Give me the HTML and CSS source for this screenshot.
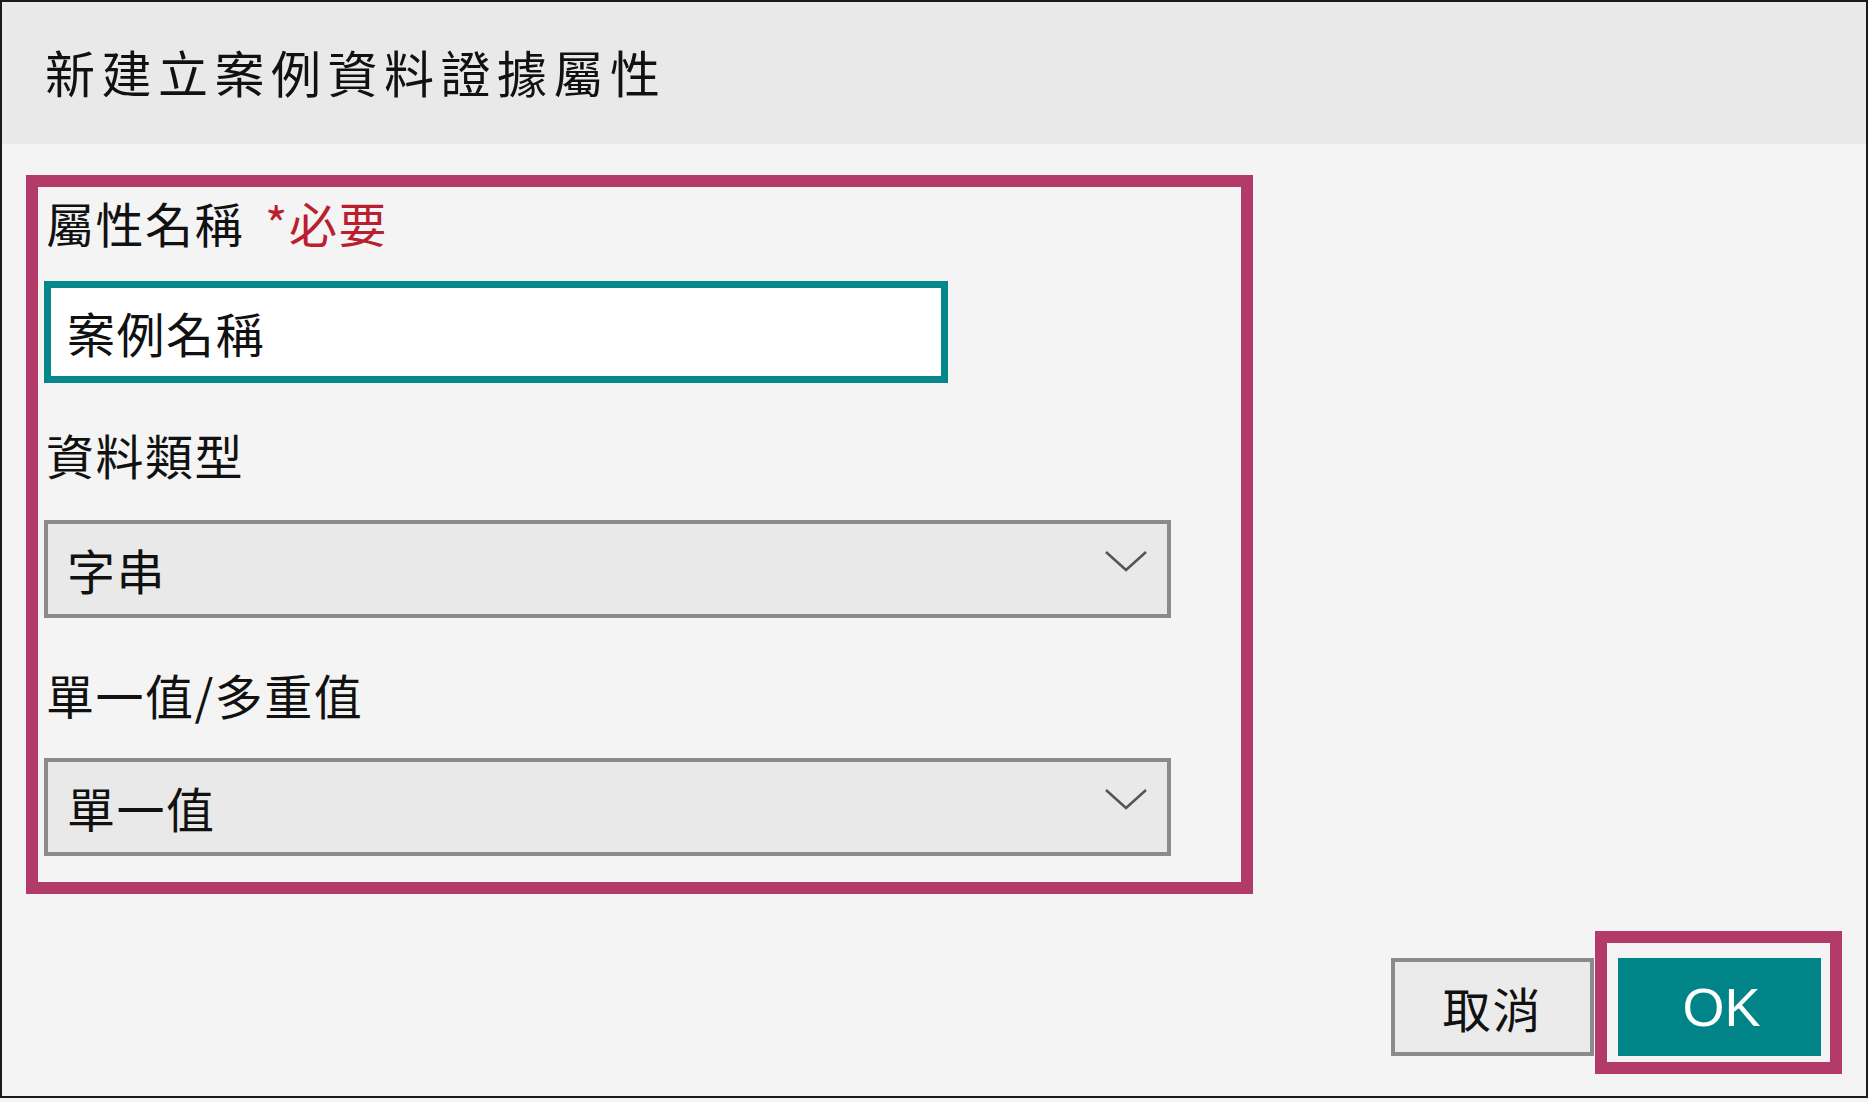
FILE: index.html
```html
<!DOCTYPE html>
<html lang="zh-Hant">
<head>
<meta charset="utf-8">
<title>新建立案例資料證據屬性</title>
<link rel="stylesheet" href="styles.css">
</head>
<body>
<div class="dialog">
  <div class="header">新建立案例資料證據屬性</div>
  <div class="body">
    <div class="fields">
      <div class="label label-first">屬性名稱<span class="required">*必要</span></div>
      <div class="input">案例名稱</div>
      <div class="label label-second">資料類型</div>
      <div class="select select-first">
        <span>字串</span>
        <svg class="chevron" width="44" height="22" viewBox="0 0 44 22"><path d="M2 2 L22 20 L42 2" fill="none" stroke="#555" stroke-width="2.5"/></svg>
      </div>
      <div class="label label-third">單一值/多重值</div>
      <div class="select select-second">
        <span>單一值</span>
        <svg class="chevron" width="44" height="22" viewBox="0 0 44 22"><path d="M2 2 L22 20 L42 2" fill="none" stroke="#555" stroke-width="2.5"/></svg>
      </div>
    </div>
    <div class="footer">
      <div class="cancel">取消</div>
      <div class="okwrap"><div class="ok">OK</div></div>
    </div>
  </div>
</div>
</body>
</html>
```

FILE: styles.css
```css
html, body {
  margin: 0;
  padding: 0;
  background: #f4f4f4;
}

body {
  font-family: "Noto Sans CJK TC", "Noto Sans CJK SC", sans-serif;
  color: #111;
}

.dialog {
  width: 1868px;
  height: 1098px;
  box-sizing: border-box;
  border: 2px solid #1b1b1b;
  background: #f4f4f4;
  display: flex;
  flex-direction: column;
}

.header {
  height: 142px;
  flex: none;
  box-sizing: border-box;
  background: #e9e9e9;
  display: flex;
  align-items: center;
  padding-left: 43px;
  padding-bottom: 4px;
  font-size: 50px;
  letter-spacing: 6.5px;
}

.body {
  flex: 1;
  padding: 31px 24px 0 24px;
  display: flex;
  flex-direction: column;
}

.fields {
  width: 1227px;
  box-sizing: border-box;
  border: 12px solid #b33b69;
  padding: 7px 0 26px 6px;
}

.label {
  font-size: 48px;
  line-height: 56px;
  letter-spacing: 1.5px;
  padding-left: 2px;
}

.required {
  color: #b91f2e;
  margin-left: 21px;
}

.label-second { margin-top: 43px; }
.label-third { margin-top: 48px; }

.input {
  margin-top: 31px;
  width: 904px;
  height: 102px;
  box-sizing: border-box;
  border: 7px solid #05878b;
  background: #fff;
  padding-left: 16px;
  display: flex;
  align-items: center;
  font-size: 48px;
  letter-spacing: 1.5px;
}

.select {
  width: 1127px;
  height: 98px;
  box-sizing: border-box;
  border: 4px solid #8b8b8b;
  background: #e9e9e9;
  display: flex;
  align-items: center;
  justify-content: space-between;
  padding: 0 19px 0 19px;
  font-size: 48px;
  letter-spacing: 1.5px;
}

.select-first { margin-top: 38px; }
.select-second { margin-top: 36px; }

.chevron {
  display: block;
  margin-bottom: 17px;
}

.footer {
  display: flex;
  justify-content: flex-end;
  align-items: flex-start;
  margin-top: 37px;
}

.cancel {
  margin-top: 27px;
  margin-right: 1px;
  width: 203px;
  height: 98px;
  box-sizing: border-box;
  border: 4px solid #8b8b8b;
  background: #ebebeb;
  display: flex;
  align-items: center;
  justify-content: center;
  font-size: 48px;
  letter-spacing: 2px;
}

.okwrap {
  border: 12px solid #b33b69;
  padding: 15px 9px 6px 11px;
}

.ok {
  width: 203px;
  height: 98px;
  background: #008488;
  color: #fff;
  display: flex;
  align-items: center;
  justify-content: center;
  padding-left: 4px;
  box-sizing: border-box;
  font-family: "Liberation Sans", Arial, sans-serif;
  font-size: 54px;
}
```
